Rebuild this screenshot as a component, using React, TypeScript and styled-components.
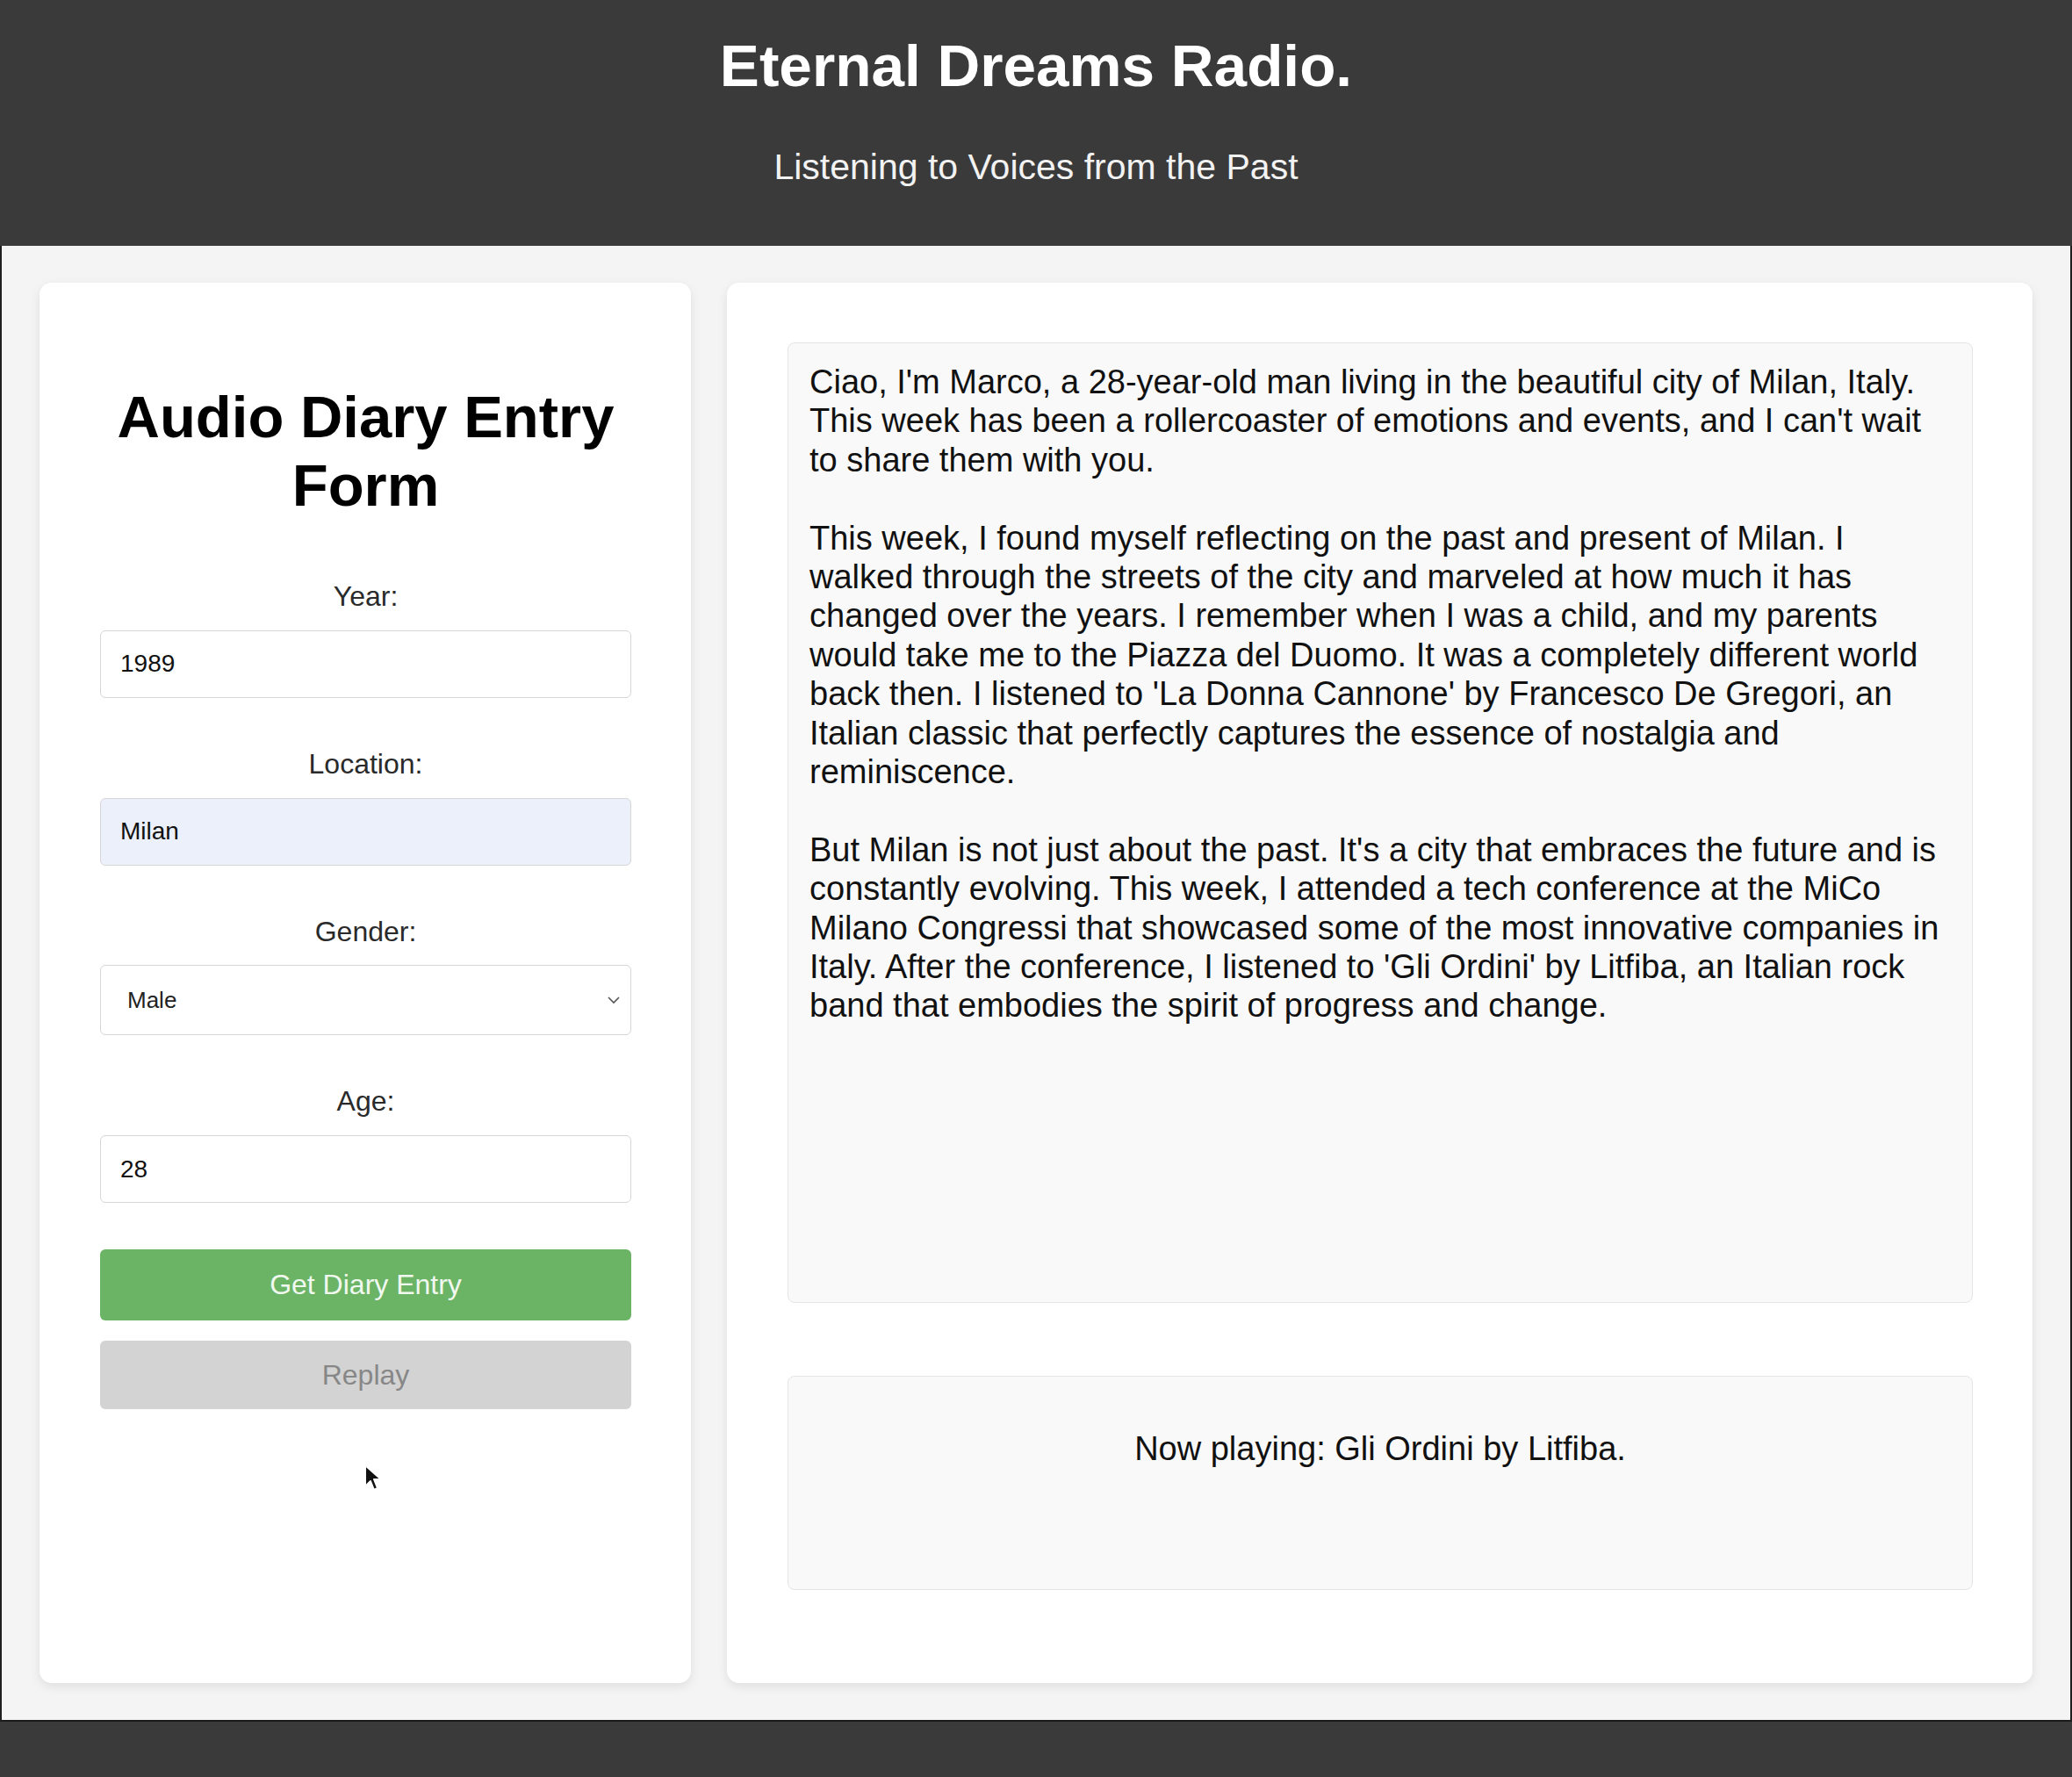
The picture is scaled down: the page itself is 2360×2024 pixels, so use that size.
import React from "react";
import styled, { createGlobalStyle } from "styled-components";

const Global = createGlobalStyle`
  html, body { margin: 0; padding: 0; background: #3a3a3a; }
  body { font-family: "Liberation Sans", Arial, Helvetica, sans-serif; }
  * { box-sizing: border-box; }
`;

const Page = styled.div`
  width: 2360px;
  display: flex;
  flex-direction: column;
`;

const Header = styled.header`
  background: #3a3a3a;
  color: #fff;
  text-align: center;
  padding: 36px 0 0;
  height: 280px;
`;

const Title = styled.h1`
  margin: 0;
  font-size: 67.5px;
  font-weight: 700;
  line-height: 1.149;
`;

const Subtitle = styled.p`
  margin: 53px 0 0;
  font-size: 41px;
  line-height: 1.149;
  color: #f2f2f2;
`;

const Main = styled.main`
  height: 1681px;
  background: #f4f4f4;
  border-left: 2px solid #1f1f1f;
  border-right: 2px solid #1f1f1f;
  border-bottom: 2px solid #1a1a1a;
  padding: 42px 43px 42px;
  display: flex;
  gap: 41px;
`;

const Card = styled.section<{ $w?: number }>`
  background: #fff;
  border-radius: 14px;
  box-shadow: 0 4px 12px rgba(0, 0, 0, 0.09);
  ${(p) => (p.$w ? `width: ${p.$w}px; flex: none;` : "flex: 1;")}
  position: relative;
`;

const FormCard = styled(Card)`
  padding: 69px 68px 0 69px;
  display: flex;
  flex-direction: column;
`;

const FormTitle = styled.h2`
  margin: 45px 0 69px;
  font-size: 67px;
  line-height: 78px;
  font-weight: 700;
  text-align: center;
  color: #000;
`;

const Fields = styled.div`
  display: flex;
  flex-direction: column;
  gap: 57px;
`;

const Field = styled.div`
  display: flex;
  flex-direction: column;
  gap: 20px;
`;

const Label = styled.label`
  font-size: 32px;
  line-height: 1.149;
  color: #2a2a2a;
  text-align: center;
`;

const TextInput = styled.input<{ $autofill?: boolean }>`
  width: 100%;
  height: 77px;
  border: 1px solid #d6d6d6;
  border-radius: 6px;
  padding: 0 22px;
  font-family: "Liberation Sans", Arial, Helvetica, sans-serif;
  font-size: 28px;
  color: #111;
  background: ${(p) => (p.$autofill ? "#ebf0fb" : "#fff")};
  outline: none;
`;

const SelectWrap = styled.div`
  position: relative;
  height: 80px;
`;

const Select = styled.select`
  appearance: none;
  -webkit-appearance: none;
  width: 100%;
  height: 80px;
  border: 1px solid #d6d6d6;
  border-radius: 6px;
  padding: 0 30px;
  font-family: "Liberation Sans", Arial, Helvetica, sans-serif;
  font-size: 26px;
  color: #222;
  background: #fff;
  outline: none;
`;

const Chevron = styled.svg`
  position: absolute;
  right: 12px;
  top: 34px;
  width: 16px;
  height: 12px;
  pointer-events: none;
`;

const Buttons = styled.div`
  display: flex;
  flex-direction: column;
  gap: 23px;
  margin-top: 53px;
`;

const Button = styled.button<{ $variant: "primary" | "muted" }>`
  width: 100%;
  height: ${(p) => (p.$variant === "primary" ? 81 : 78)}px;
  border: none;
  border-radius: 6px;
  font-family: "Liberation Sans", Arial, Helvetica, sans-serif;
  font-size: 32px;
  background: ${(p) => (p.$variant === "primary" ? "#6bb466" : "#d3d3d3")};
  color: ${(p) => (p.$variant === "primary" ? "#f1f8ef" : "#878787")};
  cursor: pointer;
`;

const Cursor = styled.svg`
  position: absolute;
  left: 369px;
  top: 1345px;
  width: 22px;
  height: 32px;
`;

const OutputCard = styled(Card)`
  padding: 68px 68px 0 69px;
  display: flex;
  flex-direction: column;
`;

const Box = styled.div`
  background: #f9f9f9;
  border: 1px solid #e4e4e4;
  border-radius: 8px;
`;

const DiaryBox = styled(Box)`
  height: 1094px;
  padding: 22px 24px 20px;
  font-size: 38px;
  line-height: 44.4px;
  color: #111;
`;

const Para = styled.p`
  margin: 0 0 44.4px;
`;

const NowPlaying = styled(Box)`
  margin-top: 83px;
  height: 244px;
  padding: 60px 24px 0;
  font-size: 38px;
  line-height: 44.4px;
  color: #111;
  text-align: center;
`;

const Footer = styled.footer`
  background: #3a3a3a;
  height: 63px;
`;

const paragraphs = [
  "Ciao, I'm Marco, a 28-year-old man living in the beautiful city of Milan, Italy. This week has been a rollercoaster of emotions and events, and I can't wait to share them with you.",
  "This week, I found myself reflecting on the past and present of Milan. I walked through the streets of the city and marveled at how much it has changed over the years. I remember when I was a child, and my parents would take me to the Piazza del Duomo. It was a completely different world back then. I listened to 'La Donna Cannone' by Francesco De Gregori, an Italian classic that perfectly captures the essence of nostalgia and reminiscence.",
  "But Milan is not just about the past. It's a city that embraces the future and is constantly evolving. This week, I attended a tech conference at the MiCo Milano Congressi that showcased some of the most innovative companies in Italy. After the conference, I listened to 'Gli Ordini' by Litfiba, an Italian rock band that embodies the spirit of progress and change.",
];

export default function App() {
  return (
    <Page>
      <Global />
      <Header>
        <Title>Eternal Dreams Radio.</Title>
        <Subtitle>Listening to Voices from the Past</Subtitle>
      </Header>
      <Main>
        <FormCard $w={742}>
          <FormTitle>Audio Diary Entry Form</FormTitle>
          <Fields>
            <Field>
              <Label htmlFor="year">Year:</Label>
              <TextInput id="year" defaultValue="1989" />
            </Field>
            <Field>
              <Label htmlFor="location">Location:</Label>
              <TextInput id="location" defaultValue="Milan" $autofill />
            </Field>
            <Field>
              <Label htmlFor="gender">Gender:</Label>
              <SelectWrap>
                <Select id="gender" defaultValue="Male">
                  <option>Male</option>
                  <option>Female</option>
                  <option>Other</option>
                </Select>
                <Chevron viewBox="0 0 16 12">
                  <polyline points="2,3 8,9 14,3" fill="none" stroke="#555" strokeWidth="1.6" />
                </Chevron>
              </SelectWrap>
            </Field>
            <Field>
              <Label htmlFor="age">Age:</Label>
              <TextInput id="age" defaultValue="28" />
            </Field>
          </Fields>
          <Buttons>
            <Button $variant="primary">Get Diary Entry</Button>
            <Button $variant="muted">Replay</Button>
          </Buttons>
          <Cursor viewBox="0 0 22 32">
            <path
              d="M2 2 L2 26 L8 20 L12 30 L16 28 L12 18 L20 18 Z"
              fill="#111"
              stroke="#fff"
              strokeWidth="2"
              strokeLinejoin="round"
            />
          </Cursor>
        </FormCard>
        <OutputCard>
          <DiaryBox>
            {paragraphs.map((p, i) => (
              <Para key={i}>{p}</Para>
            ))}
          </DiaryBox>
          <NowPlaying>Now playing: Gli Ordini by Litfiba.</NowPlaying>
        </OutputCard>
      </Main>
      <Footer />
    </Page>
  );
}
